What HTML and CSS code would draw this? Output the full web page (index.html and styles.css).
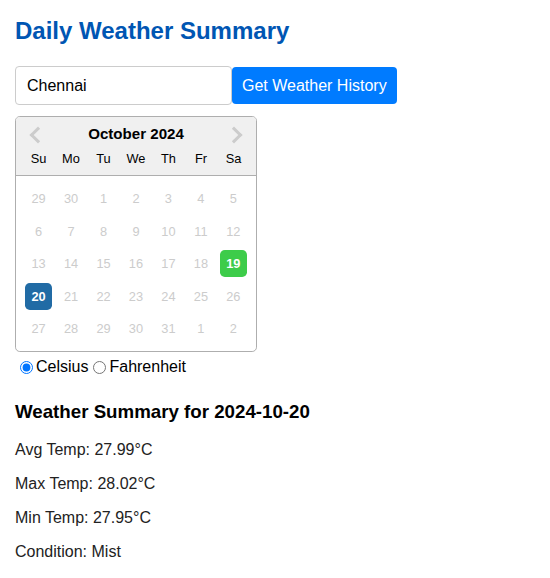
FILE: index.html
```html
<!DOCTYPE html>
<html>
<head>
<meta charset="utf-8">
<link rel="stylesheet" href="styles.css">
</head>
<body>
<div class="page">
  <h1 class="title">Daily Weather Summary</h1>
  <div class="search">
    <input class="city" type="text" value="Chennai">
    <button class="fetch">Get Weather History</button>
  </div>
  <div class="calendar">
    <div class="cal-header">
      <span class="nav nav-prev"></span>
      <span class="nav nav-next"></span>
      <div class="current-month">October 2024</div>
      <div class="day-names">
        <div class="day-name">Su</div><div class="day-name">Mo</div><div class="day-name">Tu</div><div class="day-name">We</div><div class="day-name">Th</div><div class="day-name">Fr</div><div class="day-name">Sa</div>
      </div>
    </div>
    <div class="month">
      <div class="week"><div class="day">29</div><div class="day">30</div><div class="day">1</div><div class="day">2</div><div class="day">3</div><div class="day">4</div><div class="day">5</div></div>
      <div class="week"><div class="day">6</div><div class="day">7</div><div class="day">8</div><div class="day">9</div><div class="day">10</div><div class="day">11</div><div class="day">12</div></div>
      <div class="week"><div class="day">13</div><div class="day">14</div><div class="day">15</div><div class="day">16</div><div class="day">17</div><div class="day">18</div><div class="day highlighted">19</div></div>
      <div class="week"><div class="day selected">20</div><div class="day">21</div><div class="day">22</div><div class="day">23</div><div class="day">24</div><div class="day">25</div><div class="day">26</div></div>
      <div class="week"><div class="day">27</div><div class="day">28</div><div class="day">29</div><div class="day">30</div><div class="day">31</div><div class="day">1</div><div class="day">2</div></div>
    </div>
  </div>
  <div class="units"><label class="unit"><input type="radio" name="unit" checked>Celsius</label><label class="unit"><input type="radio" name="unit">Fahrenheit</label></div>
  <div class="summary">
    <h3 class="summary-title">Weather Summary for 2024-10-20</h3>
    <p class="stat">Avg Temp: 27.99°C</p>
    <p class="stat">Max Temp: 28.02°C</p>
    <p class="stat">Min Temp: 27.95°C</p>
    <p class="stat">Condition: Mist</p>
  </div>
</div>
</body>
</html>
```
FILE: styles.css
```css
html, body {
  margin: 0;
  padding: 0;
  background: #fff;
}
.page {
  padding: 0 15px;
  font-family: "Liberation Sans", Arial, sans-serif;
  color: #000;
}
.title {
  font-size: 24px;
  font-weight: bold;
  color: #0056b3;
  margin: 17px 0 21px;
}
.search {
  display: flex;
  align-items: center;
}
.city {
  box-sizing: border-box;
  width: 217px;
  height: 39px;
  padding: 0 11px;
  border: 1px solid #ccc;
  border-radius: 4px;
  font-family: "Liberation Sans", Arial, sans-serif;
  font-size: 16px;
  color: #000;
  outline: none;
}
.fetch {
  box-sizing: border-box;
  height: 37px;
  padding: 0 10px;
  border: none;
  border-radius: 4px;
  background: #007bff;
  color: #fff;
  font-family: "Liberation Sans", Arial, sans-serif;
  font-size: 16px;
}
.calendar {
  margin-top: 11px;
  width: 240px;
  border: 1px solid #aeaeae;
  border-radius: 4.8px;
  font-size: 12.8px;
  background: #fff;
  overflow: hidden;
}
.cal-header {
  position: relative;
  background: #f0f0f0;
  border-bottom: 1px solid #aeaeae;
  padding-top: 8px;
  text-align: center;
}
.current-month {
  font-weight: bold;
  font-size: 15.1px;
  line-height: 17.5px;
}
.day-names {
  display: flex;
  justify-content: center;
  padding-bottom: 2.6px;
}
.day-name, .day {
  width: 27.2px;
  line-height: 27.2px;
  margin: 2.66px;
  text-align: center;
}
.day-name {
  margin-bottom: 0;
}
.month {
  padding: 6.4px;
}
.week {
  display: flex;
}
.day {
  color: #ccc;
  border-radius: 4.8px;
}
.day.highlighted {
  background: #3dcc4a;
  color: #fff;
  font-weight: bold;
}
.day.selected {
  background: #216ba5;
  color: #fff;
  font-weight: bold;
}
.nav {
  position: absolute;
  top: 12px;
  width: 9px;
  height: 9px;
  border-color: #ccc;
  border-style: solid;
  border-width: 3px 3px 0 0;
}
.nav-prev {
  left: 16px;
  transform: rotate(225deg);
}
.nav-next {
  right: 16px;
  transform: rotate(45deg);
}
.units {
  display: flex;
  margin-top: 6px;
  font-size: 16px;
  line-height: 18px;
}
.unit {
  display: flex;
  align-items: center;
}
.unit input {
  margin: 0 3px 0 5px;
  width: 13px;
  height: 13px;
}
.summary-title {
  font-size: 18.72px;
  font-weight: bold;
  margin: 25px 0 18px;
}
.stat {
  font-size: 16px;
  margin: 16px 0;
  color: #222;
}
```
